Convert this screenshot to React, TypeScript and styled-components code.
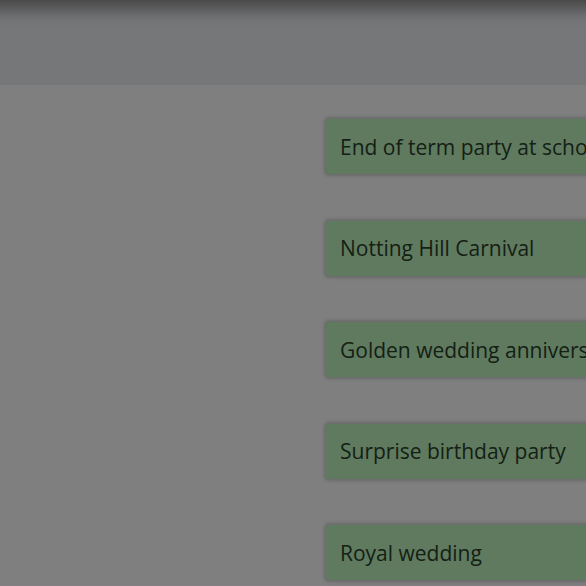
import React from "react";
import styled, { createGlobalStyle } from "styled-components";

const Global = createGlobalStyle`
  html, body { margin: 0; padding: 0; background: #7f7f7f; overflow: hidden; }
  body { font-family: "Open Sans", "Liberation Sans", sans-serif; }
`;

const Page = styled.div`
  width: 586px;
  height: 586px;
  overflow: hidden;
  display: flex;
  flex-direction: column;
  background: #7f7f7f;
`;

const Header = styled.header`
  height: 85px;
  flex: none;
  background: linear-gradient(
    to bottom,
    #4a4a4b 0px,
    #525253 4px,
    #5f6061 10px,
    #6c6d6f 16px,
    #747577 22px,
    #767779 30px,
    #767779 100%
  );
`;

const Main = styled.main`
  flex: 1;
  display: flex;
  flex-direction: column;
  gap: 46.5px;
  padding: 34px 0 0 326px;
`;

const Card = styled.div`
  flex: none;
  width: 420px;
  height: 55px;
  box-sizing: border-box;
  display: flex;
  align-items: center;
  padding-left: 14px;
  background: #5f7a5f;
  border-radius: 3px;
  box-shadow: 0 0 3px 2px rgba(90, 90, 90, 0.55);
  color: #142014;
  font-size: 21px;
  white-space: nowrap;
`;

const events = [
  "End of term party at school",
  "Notting Hill Carnival",
  "Golden wedding anniversary",
  "Surprise birthday party",
  "Royal wedding",
];

export default function App() {
  return (
    <>
      <Global />
      <Page>
        <Header />
        <Main>
          {events.map((e) => (
            <Card key={e}>{e}</Card>
          ))}
        </Main>
      </Page>
    </>
  );
}
